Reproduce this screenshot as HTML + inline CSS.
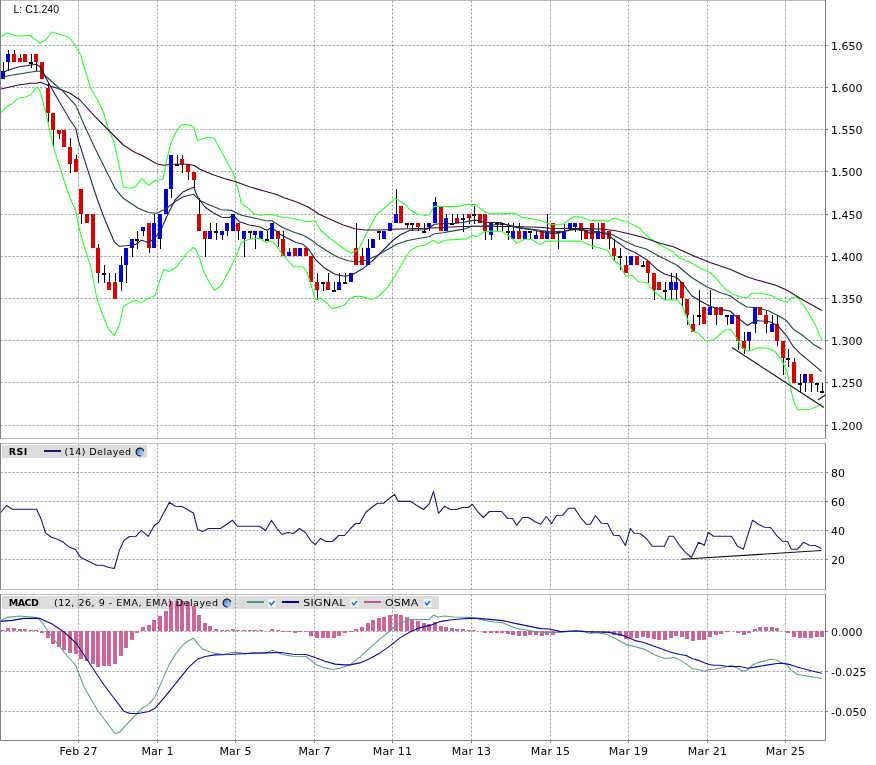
<!DOCTYPE html>
<html><head><meta charset="utf-8"><title>Chart</title>
<style>
html,body{margin:0;padding:0;background:#fff;}
body{width:876px;height:765px;overflow:hidden;}
svg{display:block;will-change:transform;}
.ax{font-family:"DejaVu Sans","Liberation Sans",sans-serif;font-size:11px;fill:#000;}
.lb{font-family:"DejaVu Sans","Liberation Sans",sans-serif;font-size:9.5px;fill:#000;}
.lbb{font-family:"DejaVu Sans","Liberation Sans",sans-serif;font-size:9.5px;font-weight:bold;fill:#000;}
.top{font-family:"Liberation Sans",sans-serif;font-size:10.5px;fill:#000;}
.g{stroke:#989898;stroke-width:1;stroke-dasharray:2 2;}
.b{stroke:#808080;stroke-width:1;shape-rendering:crispEdges;fill:none;}
.ln{fill:none;stroke-width:1.1;stroke-linejoin:round;}
</style></head><body>
<svg width="876" height="765" viewBox="0 0 876 765">
<rect width="876" height="765" fill="#fff"/>
<defs><linearGradient id="gb" x1="0" y1="0" x2="1" y2="1"><stop offset="0" stop-color="#2f5f96"/><stop offset="0.45" stop-color="#7fb2e6"/><stop offset="1" stop-color="#b4dcff"/></linearGradient></defs>
<rect x="2" y="445" width="145" height="13" fill="#dcdcdc"/>
<rect x="2" y="596" width="437" height="13" fill="#dcdcdc"/>
<g class="g">
<line x1="78.5" y1="0.5" x2="78.5" y2="438"/><line x1="157.5" y1="0.5" x2="157.5" y2="438"/><line x1="235.5" y1="0.5" x2="235.5" y2="438"/><line x1="314.5" y1="0.5" x2="314.5" y2="438"/><line x1="392.5" y1="0.5" x2="392.5" y2="438"/><line x1="471.5" y1="0.5" x2="471.5" y2="438"/><line x1="550.5" y1="0.5" x2="550.5" y2="438"/><line x1="628.5" y1="0.5" x2="628.5" y2="438"/><line x1="707.5" y1="0.5" x2="707.5" y2="438"/><line x1="785.5" y1="0.5" x2="785.5" y2="438"/><line x1="78.5" y1="443.5" x2="78.5" y2="589"/><line x1="157.5" y1="443.5" x2="157.5" y2="589"/><line x1="235.5" y1="443.5" x2="235.5" y2="589"/><line x1="314.5" y1="443.5" x2="314.5" y2="589"/><line x1="392.5" y1="443.5" x2="392.5" y2="589"/><line x1="471.5" y1="443.5" x2="471.5" y2="589"/><line x1="550.5" y1="443.5" x2="550.5" y2="589"/><line x1="628.5" y1="443.5" x2="628.5" y2="589"/><line x1="707.5" y1="443.5" x2="707.5" y2="589"/><line x1="785.5" y1="443.5" x2="785.5" y2="589"/><line x1="78.5" y1="594.5" x2="78.5" y2="740"/><line x1="157.5" y1="594.5" x2="157.5" y2="740"/><line x1="235.5" y1="594.5" x2="235.5" y2="740"/><line x1="314.5" y1="594.5" x2="314.5" y2="740"/><line x1="392.5" y1="594.5" x2="392.5" y2="740"/><line x1="471.5" y1="594.5" x2="471.5" y2="740"/><line x1="550.5" y1="594.5" x2="550.5" y2="740"/><line x1="628.5" y1="594.5" x2="628.5" y2="740"/><line x1="707.5" y1="594.5" x2="707.5" y2="740"/><line x1="785.5" y1="594.5" x2="785.5" y2="740"/><line x1="0.5" y1="45.5" x2="825" y2="45.5"/><line x1="0.5" y1="87.5" x2="825" y2="87.5"/><line x1="0.5" y1="129.5" x2="825" y2="129.5"/><line x1="0.5" y1="171.5" x2="825" y2="171.5"/><line x1="0.5" y1="214.5" x2="825" y2="214.5"/><line x1="0.5" y1="256.5" x2="825" y2="256.5"/><line x1="0.5" y1="298.5" x2="825" y2="298.5"/><line x1="0.5" y1="340.5" x2="825" y2="340.5"/><line x1="0.5" y1="382.5" x2="825" y2="382.5"/><line x1="0.5" y1="425.5" x2="825" y2="425.5"/><line x1="0.5" y1="472.5" x2="825" y2="472.5"/><line x1="0.5" y1="501.5" x2="825" y2="501.5"/><line x1="0.5" y1="530.5" x2="825" y2="530.5"/><line x1="0.5" y1="559.5" x2="825" y2="559.5"/><line x1="0.5" y1="631.5" x2="825" y2="631.5"/><line x1="0.5" y1="671.5" x2="825" y2="671.5"/><line x1="0.5" y1="711.5" x2="825" y2="711.5"/>
</g>
<g shape-rendering="crispEdges">
<rect x="3" y="62" width="1" height="17" fill="#000"/><rect x="1" y="71" width="4" height="8" fill="#0000d0"/><rect x="8" y="50" width="1" height="21" fill="#000"/><rect x="6" y="54" width="4" height="8" fill="#0000d0"/><rect x="14" y="50" width="1" height="12" fill="#000"/><rect x="12" y="54" width="4" height="8" fill="#d40000"/><rect x="20" y="54" width="1" height="8" fill="#000"/><rect x="18" y="58" width="4" height="4" fill="#d40000"/><rect x="25" y="54" width="1" height="8" fill="#000"/><rect x="23" y="54" width="4" height="8" fill="#d40000"/><rect x="31" y="54" width="1" height="14" fill="#000"/><rect x="29" y="62" width="4" height="2" fill="#000"/><rect x="36" y="54" width="1" height="17" fill="#000"/><rect x="34" y="54" width="4" height="8" fill="#d40000"/><rect x="42" y="62" width="1" height="17" fill="#000"/><rect x="40" y="62" width="4" height="17" fill="#d40000"/><rect x="48" y="83" width="1" height="39" fill="#000"/><rect x="46" y="88" width="4" height="25" fill="#d40000"/><rect x="53" y="113" width="1" height="34" fill="#000"/><rect x="51" y="113" width="4" height="17" fill="#d40000"/><rect x="59" y="130" width="1" height="9" fill="#000"/><rect x="57" y="130" width="4" height="4" fill="#d40000"/><rect x="64" y="130" width="1" height="17" fill="#000"/><rect x="62" y="130" width="4" height="17" fill="#d40000"/><rect x="70" y="138" width="1" height="35" fill="#000"/><rect x="68" y="147" width="4" height="17" fill="#d40000"/><rect x="76" y="155" width="1" height="17" fill="#000"/><rect x="74" y="159" width="4" height="13" fill="#d40000"/><rect x="81" y="189" width="1" height="35" fill="#000"/><rect x="79" y="189" width="4" height="25" fill="#d40000"/><rect x="87" y="214" width="1" height="9" fill="#000"/><rect x="85" y="214" width="4" height="9" fill="#d40000"/><rect x="93" y="214" width="1" height="34" fill="#000"/><rect x="91" y="214" width="4" height="34" fill="#d40000"/><rect x="98" y="244" width="1" height="39" fill="#000"/><rect x="96" y="248" width="4" height="25" fill="#d40000"/><rect x="104" y="265" width="1" height="18" fill="#000"/><rect x="102" y="273" width="4" height="2" fill="#000"/><rect x="109" y="273" width="1" height="17" fill="#000"/><rect x="107" y="282" width="4" height="8" fill="#d40000"/><rect x="115" y="273" width="1" height="26" fill="#000"/><rect x="113" y="282" width="4" height="17" fill="#d40000"/><rect x="121" y="256" width="1" height="35" fill="#000"/><rect x="119" y="265" width="4" height="17" fill="#0000d0"/><rect x="126" y="248" width="1" height="35" fill="#000"/><rect x="124" y="248" width="4" height="17" fill="#0000d0"/><rect x="132" y="239" width="1" height="18" fill="#000"/><rect x="130" y="239" width="4" height="9" fill="#0000d0"/><rect x="137" y="231" width="1" height="18" fill="#000"/><rect x="135" y="239" width="4" height="2" fill="#000"/><rect x="143" y="227" width="1" height="9" fill="#000"/><rect x="141" y="227" width="4" height="4" fill="#0000d0"/><rect x="149" y="223" width="1" height="30" fill="#000"/><rect x="147" y="223" width="4" height="25" fill="#d40000"/><rect x="154" y="214" width="1" height="34" fill="#000"/><rect x="152" y="223" width="4" height="25" fill="#0000d0"/><rect x="160" y="214" width="1" height="35" fill="#000"/><rect x="158" y="214" width="4" height="25" fill="#0000d0"/><rect x="166" y="189" width="1" height="25" fill="#000"/><rect x="164" y="189" width="4" height="25" fill="#0000d0"/><rect x="171" y="155" width="1" height="43" fill="#000"/><rect x="169" y="155" width="4" height="34" fill="#0000d0"/><rect x="177" y="155" width="1" height="10" fill="#000"/><rect x="175" y="164" width="4" height="2" fill="#000"/><rect x="182" y="155" width="1" height="18" fill="#000"/><rect x="180" y="159" width="4" height="5" fill="#d40000"/><rect x="188" y="165" width="1" height="15" fill="#000"/><rect x="186" y="165" width="4" height="7" fill="#d40000"/><rect x="194" y="172" width="1" height="16" fill="#000"/><rect x="192" y="172" width="4" height="8" fill="#d40000"/><rect x="199" y="198" width="1" height="33" fill="#000"/><rect x="197" y="214" width="4" height="17" fill="#d40000"/><rect x="205" y="231" width="1" height="26" fill="#000"/><rect x="203" y="231" width="4" height="8" fill="#d40000"/><rect x="210" y="223" width="1" height="16" fill="#000"/><rect x="208" y="231" width="4" height="8" fill="#0000d0"/><rect x="216" y="223" width="1" height="17" fill="#000"/><rect x="214" y="231" width="4" height="2" fill="#000"/><rect x="222" y="231" width="1" height="9" fill="#000"/><rect x="220" y="231" width="4" height="4" fill="#0000d0"/><rect x="227" y="223" width="1" height="13" fill="#000"/><rect x="225" y="223" width="4" height="8" fill="#0000d0"/><rect x="233" y="214" width="1" height="17" fill="#000"/><rect x="231" y="214" width="4" height="17" fill="#0000d0"/><rect x="238" y="223" width="1" height="17" fill="#000"/><rect x="236" y="223" width="4" height="8" fill="#d40000"/><rect x="244" y="231" width="1" height="26" fill="#000"/><rect x="242" y="231" width="4" height="8" fill="#0000d0"/><rect x="250" y="232" width="1" height="7" fill="#000"/><rect x="248" y="231" width="4" height="2" fill="#000"/><rect x="255" y="231" width="1" height="18" fill="#000"/><rect x="253" y="231" width="4" height="4" fill="#0000d0"/><rect x="261" y="231" width="1" height="8" fill="#000"/><rect x="259" y="231" width="4" height="8" fill="#0000d0"/><rect x="267" y="231" width="1" height="9" fill="#000"/><rect x="265" y="239" width="4" height="2" fill="#000"/><rect x="272" y="223" width="1" height="16" fill="#000"/><rect x="270" y="223" width="4" height="16" fill="#0000d0"/><rect x="278" y="231" width="1" height="16" fill="#000"/><rect x="276" y="231" width="4" height="8" fill="#d40000"/><rect x="283" y="231" width="1" height="25" fill="#000"/><rect x="281" y="239" width="4" height="17" fill="#d40000"/><rect x="289" y="248" width="1" height="8" fill="#000"/><rect x="287" y="252" width="4" height="4" fill="#0000d0"/><rect x="295" y="248" width="1" height="8" fill="#000"/><rect x="293" y="248" width="4" height="8" fill="#d40000"/><rect x="300" y="248" width="1" height="8" fill="#000"/><rect x="298" y="248" width="4" height="8" fill="#0000d0"/><rect x="306" y="248" width="1" height="8" fill="#000"/><rect x="304" y="248" width="4" height="8" fill="#d40000"/><rect x="311" y="256" width="1" height="26" fill="#000"/><rect x="309" y="256" width="4" height="26" fill="#d40000"/><rect x="317" y="273" width="1" height="27" fill="#000"/><rect x="315" y="282" width="4" height="8" fill="#d40000"/><rect x="323" y="283" width="1" height="8" fill="#000"/><rect x="321" y="282" width="4" height="2" fill="#000"/><rect x="328" y="273" width="1" height="17" fill="#000"/><rect x="326" y="282" width="4" height="8" fill="#d40000"/><rect x="334" y="282" width="1" height="9" fill="#000"/><rect x="332" y="290" width="4" height="2" fill="#000"/><rect x="339" y="273" width="1" height="17" fill="#000"/><rect x="337" y="282" width="4" height="8" fill="#0000d0"/><rect x="345" y="273" width="1" height="10" fill="#000"/><rect x="343" y="282" width="4" height="2" fill="#000"/><rect x="351" y="273" width="1" height="9" fill="#000"/><rect x="349" y="273" width="4" height="9" fill="#0000d0"/><rect x="356" y="223" width="1" height="42" fill="#000"/><rect x="354" y="248" width="4" height="17" fill="#d40000"/><rect x="362" y="248" width="1" height="17" fill="#000"/><rect x="360" y="256" width="4" height="9" fill="#d40000"/><rect x="368" y="239" width="1" height="26" fill="#000"/><rect x="366" y="248" width="4" height="17" fill="#0000d0"/><rect x="373" y="239" width="1" height="9" fill="#000"/><rect x="371" y="239" width="4" height="9" fill="#0000d0"/><rect x="379" y="232" width="1" height="8" fill="#000"/><rect x="377" y="231" width="4" height="2" fill="#000"/><rect x="384" y="231" width="1" height="8" fill="#000"/><rect x="382" y="231" width="4" height="8" fill="#0000d0"/><rect x="390" y="223" width="1" height="8" fill="#000"/><rect x="388" y="223" width="4" height="8" fill="#0000d0"/><rect x="396" y="189" width="1" height="34" fill="#000"/><rect x="394" y="214" width="4" height="9" fill="#0000d0"/><rect x="401" y="206" width="1" height="17" fill="#000"/><rect x="399" y="206" width="4" height="17" fill="#d40000"/><rect x="407" y="224" width="1" height="4" fill="#000"/><rect x="405" y="223" width="4" height="2" fill="#000"/><rect x="412" y="224" width="1" height="7" fill="#000"/><rect x="410" y="223" width="4" height="2" fill="#000"/><rect x="418" y="223" width="1" height="8" fill="#000"/><rect x="416" y="223" width="4" height="4" fill="#d40000"/><rect x="424" y="223" width="1" height="9" fill="#000"/><rect x="422" y="231" width="4" height="2" fill="#000"/><rect x="429" y="223" width="1" height="8" fill="#000"/><rect x="427" y="223" width="4" height="4" fill="#0000d0"/><rect x="435" y="197" width="1" height="26" fill="#000"/><rect x="433" y="202" width="4" height="21" fill="#0000d0"/><rect x="441" y="207" width="1" height="24" fill="#000"/><rect x="439" y="207" width="4" height="24" fill="#d40000"/><rect x="446" y="214" width="1" height="17" fill="#000"/><rect x="444" y="218" width="4" height="13" fill="#0000d0"/><rect x="452" y="214" width="1" height="10" fill="#000"/><rect x="450" y="223" width="4" height="2" fill="#000"/><rect x="457" y="214" width="1" height="9" fill="#000"/><rect x="455" y="218" width="4" height="5" fill="#d40000"/><rect x="463" y="214" width="1" height="18" fill="#000"/><rect x="461" y="218" width="4" height="2" fill="#000"/><rect x="469" y="214" width="1" height="10" fill="#000"/><rect x="467" y="214" width="4" height="4" fill="#d40000"/><rect x="474" y="206" width="1" height="18" fill="#000"/><rect x="472" y="214" width="4" height="2" fill="#000"/><rect x="480" y="214" width="1" height="9" fill="#000"/><rect x="478" y="214" width="4" height="9" fill="#d40000"/><rect x="485" y="214" width="1" height="26" fill="#000"/><rect x="483" y="214" width="4" height="17" fill="#d40000"/><rect x="491" y="223" width="1" height="17" fill="#000"/><rect x="489" y="223" width="4" height="12" fill="#0000d0"/><rect x="497" y="224" width="1" height="7" fill="#000"/><rect x="495" y="223" width="4" height="2" fill="#000"/><rect x="502" y="224" width="1" height="8" fill="#000"/><rect x="500" y="223" width="4" height="2" fill="#000"/><rect x="508" y="223" width="1" height="17" fill="#000"/><rect x="506" y="231" width="4" height="2" fill="#000"/><rect x="513" y="223" width="1" height="16" fill="#000"/><rect x="511" y="231" width="4" height="8" fill="#0000d0"/><rect x="519" y="223" width="1" height="16" fill="#000"/><rect x="517" y="231" width="4" height="8" fill="#d40000"/><rect x="525" y="231" width="1" height="8" fill="#000"/><rect x="523" y="231" width="4" height="8" fill="#0000d0"/><rect x="530" y="232" width="1" height="7" fill="#000"/><rect x="528" y="231" width="4" height="2" fill="#000"/><rect x="536" y="231" width="1" height="8" fill="#000"/><rect x="534" y="235" width="4" height="4" fill="#0000d0"/><rect x="542" y="231" width="1" height="8" fill="#000"/><rect x="540" y="231" width="4" height="8" fill="#d40000"/><rect x="547" y="214" width="1" height="25" fill="#000"/><rect x="545" y="231" width="4" height="8" fill="#0000d0"/><rect x="553" y="223" width="1" height="16" fill="#000"/><rect x="551" y="223" width="4" height="16" fill="#d40000"/><rect x="558" y="232" width="1" height="17" fill="#000"/><rect x="556" y="231" width="4" height="2" fill="#000"/><rect x="564" y="224" width="1" height="15" fill="#000"/><rect x="562" y="232" width="4" height="7" fill="#0000d0"/><rect x="570" y="223" width="1" height="6" fill="#000"/><rect x="568" y="223" width="4" height="6" fill="#0000d0"/><rect x="575" y="223" width="1" height="9" fill="#000"/><rect x="573" y="223" width="4" height="4" fill="#0000d0"/><rect x="581" y="223" width="1" height="17" fill="#000"/><rect x="579" y="223" width="4" height="8" fill="#d40000"/><rect x="586" y="231" width="1" height="8" fill="#000"/><rect x="584" y="231" width="4" height="8" fill="#d40000"/><rect x="592" y="223" width="1" height="26" fill="#000"/><rect x="590" y="223" width="4" height="16" fill="#d40000"/><rect x="598" y="223" width="1" height="16" fill="#000"/><rect x="596" y="231" width="4" height="8" fill="#0000d0"/><rect x="603" y="223" width="1" height="16" fill="#000"/><rect x="601" y="223" width="4" height="16" fill="#d40000"/><rect x="609" y="231" width="1" height="18" fill="#000"/><rect x="607" y="231" width="4" height="8" fill="#d40000"/><rect x="614" y="239" width="1" height="22" fill="#000"/><rect x="612" y="248" width="4" height="8" fill="#d40000"/><rect x="620" y="248" width="1" height="22" fill="#000"/><rect x="618" y="256" width="4" height="2" fill="#000"/><rect x="626" y="256" width="1" height="17" fill="#000"/><rect x="624" y="265" width="4" height="8" fill="#d40000"/><rect x="631" y="256" width="1" height="9" fill="#000"/><rect x="629" y="256" width="4" height="9" fill="#0000d0"/><rect x="637" y="256" width="1" height="9" fill="#000"/><rect x="635" y="256" width="4" height="9" fill="#d40000"/><rect x="643" y="261" width="1" height="5" fill="#000"/><rect x="641" y="265" width="4" height="2" fill="#000"/><rect x="648" y="261" width="1" height="22" fill="#000"/><rect x="646" y="261" width="4" height="12" fill="#d40000"/><rect x="654" y="273" width="1" height="27" fill="#000"/><rect x="652" y="273" width="4" height="17" fill="#d40000"/><rect x="659" y="282" width="1" height="8" fill="#000"/><rect x="657" y="282" width="4" height="8" fill="#d40000"/><rect x="665" y="282" width="1" height="18" fill="#000"/><rect x="663" y="290" width="4" height="2" fill="#000"/><rect x="671" y="273" width="1" height="27" fill="#000"/><rect x="669" y="282" width="4" height="8" fill="#0000d0"/><rect x="676" y="273" width="1" height="27" fill="#000"/><rect x="674" y="282" width="4" height="8" fill="#0000d0"/><rect x="682" y="282" width="1" height="26" fill="#000"/><rect x="680" y="282" width="4" height="16" fill="#d40000"/><rect x="687" y="299" width="1" height="26" fill="#000"/><rect x="685" y="299" width="4" height="16" fill="#d40000"/><rect x="693" y="315" width="1" height="17" fill="#000"/><rect x="691" y="324" width="4" height="8" fill="#d40000"/><rect x="699" y="290" width="1" height="35" fill="#000"/><rect x="697" y="315" width="4" height="2" fill="#000"/><rect x="704" y="307" width="1" height="17" fill="#000"/><rect x="702" y="307" width="4" height="17" fill="#d40000"/><rect x="710" y="290" width="1" height="25" fill="#000"/><rect x="708" y="307" width="4" height="8" fill="#0000d0"/><rect x="716" y="307" width="1" height="18" fill="#000"/><rect x="714" y="307" width="4" height="8" fill="#d40000"/><rect x="721" y="307" width="1" height="8" fill="#000"/><rect x="719" y="307" width="4" height="8" fill="#d40000"/><rect x="727" y="316" width="1" height="9" fill="#000"/><rect x="725" y="315" width="4" height="2" fill="#000"/><rect x="732" y="315" width="1" height="9" fill="#000"/><rect x="730" y="315" width="4" height="9" fill="#0000d0"/><rect x="738" y="315" width="1" height="35" fill="#000"/><rect x="736" y="315" width="4" height="26" fill="#d40000"/><rect x="744" y="332" width="1" height="22" fill="#000"/><rect x="742" y="341" width="4" height="8" fill="#d40000"/><rect x="749" y="332" width="1" height="18" fill="#000"/><rect x="747" y="332" width="4" height="9" fill="#0000d0"/><rect x="755" y="307" width="1" height="26" fill="#000"/><rect x="753" y="307" width="4" height="17" fill="#0000d0"/><rect x="760" y="307" width="1" height="8" fill="#000"/><rect x="758" y="307" width="4" height="8" fill="#d40000"/><rect x="766" y="311" width="1" height="22" fill="#000"/><rect x="764" y="315" width="4" height="9" fill="#d40000"/><rect x="772" y="315" width="1" height="17" fill="#000"/><rect x="770" y="324" width="4" height="8" fill="#0000d0"/><rect x="777" y="315" width="1" height="31" fill="#000"/><rect x="775" y="324" width="4" height="17" fill="#d40000"/><rect x="783" y="341" width="1" height="34" fill="#000"/><rect x="781" y="341" width="4" height="17" fill="#d40000"/><rect x="788" y="349" width="1" height="18" fill="#000"/><rect x="786" y="358" width="4" height="2" fill="#000"/><rect x="794" y="358" width="1" height="25" fill="#000"/><rect x="792" y="362" width="4" height="21" fill="#d40000"/><rect x="800" y="374" width="1" height="18" fill="#000"/><rect x="798" y="383" width="4" height="2" fill="#000"/><rect x="805" y="374" width="1" height="18" fill="#000"/><rect x="803" y="374" width="4" height="9" fill="#0000d0"/><rect x="811" y="374" width="1" height="18" fill="#000"/><rect x="809" y="374" width="4" height="9" fill="#d40000"/><rect x="817" y="384" width="1" height="8" fill="#000"/><rect x="815" y="383" width="4" height="2" fill="#000"/><rect x="822" y="383" width="1" height="9" fill="#000"/><rect x="820" y="391" width="4" height="2" fill="#000"/>
</g>
<polyline class="ln" points="0,37.2 6.7,33 18.3,36.3 25,35.5 30.5,35.5 40,43.3 45.8,40 51.7,32 61.7,34.7 69.2,37.5 73.3,42.5 80.8,55 82.8,62.5 90.8,88.3 97.5,100 103.3,111.7 108.3,129.2 113.3,140 118.3,161.7 123.3,187 130,188.3 135.3,187 141.7,178.3 148.7,185.3 155,180.5 163,179.2 166.7,160 170.8,143.3 176.7,130.8 181.7,124.7 187.5,124.5 193.7,127 197.5,140.5 207.5,137.2 214.2,138.3 223.3,155 233.3,173.3 238.3,190 241.3,203.3 248.3,208.3 253.3,213.5 260,215.3 271.5,214.5 282,217.3 292.7,218.3 306,221.7 315.2,220.8 320.2,230 331,239 343.3,248.3 350.8,253.3 358.3,250 366.7,233.3 376.7,214.2 385,207.5 395,198.3 405,204.2 410,210 416.7,213.8 425,215.5 429.2,215 434.2,206.3 443.3,206.5 457.1,206.6 468.5,204.3 475.4,204.6 480,208.3 485.7,212.3 490.2,213.7 515.3,213.4 522.2,217.4 531.3,218.6 541.4,220.8 550.5,224.2 556.3,224.8 563.1,224 574.5,216.3 581.4,217.4 590.5,220.6 601.9,220.3 607.6,221.4 613.9,218 621.3,220.3 627,222 640,228.3 646.7,235.8 660,245 673.3,251.7 680,258.3 690,262 700,268.3 710,272.5 716.7,279.2 725,289 733.3,294.2 741.7,297.2 747.5,297.8 751.7,293.3 761.7,293.3 771.7,295.8 781.7,300.8 787.5,302.2 791.7,297.5 797.5,297 806.7,310 815,324.2 821.7,340" stroke="#33ff33" stroke-width="1.25"/>
<polyline class="ln" points="0,113.3 6.7,106.7 12.5,103.3 18.3,98.3 25,97 30.5,95 36.7,87.2 40,90.8 45.8,112.5 53.3,146.7 65,183.3 70.8,200 75.8,210.5 78.3,225 83.3,243.3 90.8,266.7 96.7,297.5 101.9,313 108.3,328.8 114.6,335.5 119.5,324.5 121.6,314.4 123.4,306.5 129.5,302.6 135.5,300.4 141.4,302.6 148.3,298.3 155,295.8 160,280 163.8,269.2 169.2,271.7 176.7,266.7 186.7,253.3 193.3,247.5 196,249.7 198.5,255 204.3,273.3 214.3,290.5 221,285.8 229.3,270 236,256.7 241.3,242.5 249.3,239.2 259.3,238.3 266,242.5 271,240.8 276,245 282.7,255 293.5,266.7 302.7,266.7 306.8,271.7 309.7,280 315.2,299.4 320.2,298.3 326.1,302.4 332.5,308.6 338.9,306.9 344.4,305.1 349.9,298.7 354.4,296.4 360.8,296.4 366.3,297.8 371.3,299.5 376,297.8 380,295 388.3,286.7 396.7,273.3 405,258.3 410,250.8 416.7,246.7 425,245 433.3,240.3 438.3,243.3 444.6,240.2 457.1,239.4 466.3,238.9 472.5,235.3 477.1,236.6 484.5,231.7 491.4,231.1 501.6,231.1 508.5,235.7 513.1,239.1 516.5,243.4 524.5,239.3 531.3,239.3 540.3,244.6 546,241.4 552.8,241.1 580.2,241.1 592.2,245.9 600.8,248.2 607.6,250.5 613.9,260.5 620.2,265.3 625.8,276.3 631.7,275 638.3,281.7 646.7,282.5 653.3,290.8 665,300 676.7,299.7 681.7,305 687,318.3 691.7,330.8 698.3,333.3 705.8,340.8 713.3,340 720,334.5 725,330.3 730.8,329.5 736.7,338.3 741.7,347.5 748.3,351.3 758.3,347.8 768.3,348.3 775,351.7 781.7,360 786.7,370.8 790,385 793.3,400 797.5,410 810,409.2 816.7,406.7 821.7,403.3" stroke="#33ff33" stroke-width="1.25"/>
<polyline class="ln" points="0,89.2 18.3,85 30.5,83.3 36.2,83.2 40.5,82.2 48.3,85.5 57.5,88.3 70,93.3 80,100 95,116.7 108.3,130 123.3,145 135,152.5 141.7,155.3 150,160 156.7,163.7 163.3,165.3 173.3,164.2 188.3,164.2 194.2,165.5 200,169.2 211.7,174.2 225,178.7 235.8,181.7 250,187 266.7,191.7 276.7,194.5 283.3,197.5 296,201.8 307.7,206.7 319.3,214.2 331.7,220 343.3,225 355,228.8 365,230 380,230 393.3,229.2 410,228.7 426.7,228.3 443.3,227.5 457.1,226.8 472,226.3 485.7,226.3 510,226.5 540,227.2 550.5,228.2 564.2,228.5 587.1,228.6 604.2,229.2 615.6,230.8 626.7,233.3 643.3,237.5 660,243.3 673.3,246.7 693.3,255.8 710,262.5 730,269.2 746.7,276.7 756,279.7 775,285 786.7,290 800,298.3 813.3,305.8 821.7,310.5" stroke="#380838" stroke-width="1.25"/>
<polyline class="ln" points="0,78.3 8.3,75.8 36.2,71.3 40.5,71.3 50,80 63.3,91.7 75.8,105.4 84.2,125 95,148.3 106.7,171.7 115,188.3 123.3,198.3 138.3,208.3 148.3,212.5 156.7,213.2 166,208.8 175,201.7 183.3,196.7 193.3,194.2 200,200.5 210,205.3 221.5,209.8 231.8,210.4 241.5,215.2 254,218 266,220.8 271.8,220.8 282.7,227.5 292.7,231.7 304.3,235.8 312,240.5 316.7,244.2 326.7,250.8 338.3,257.5 348.3,260.8 358.3,262 366.7,260 376.7,255.8 386.7,250 396.7,244.2 406.7,240.8 416.7,238.8 429.2,236.7 434.2,233.7 443.3,232.7 451.4,231.1 462.8,229.4 472,226.3 485.7,226.3 497,224.2 502.8,223.7 514.2,226.5 525.6,228.2 541.4,230.5 552.8,231.7 564.2,231.1 575.7,229.4 587.1,230.5 598.5,232 609.9,233.5 616.8,237 623.3,240.5 635,245.8 646.7,249.2 660,256.7 676.7,265 691.7,277.5 706.7,286.7 720,292.5 730,295.8 738.3,301.7 746.7,307 758.3,308 768.3,310.8 778.3,315.8 786.7,320.8 793.3,329.2 803.3,335.8 813.3,344.2 821.7,349.2" stroke="#1e4646" stroke-width="1.2"/>
<polyline class="ln" points="0,73.8 8.3,70 18.3,67 36.2,64.2 40,66.7 48.3,82.5 58.3,100 70,120 75.8,128.3 78.7,141.7 88.3,171.7 97.5,200 105,220 114.2,241.7 119.2,246.3 126.7,245.8 135.8,244.2 141.3,240.3 148.3,242.5 155,238.3 161.7,228.3 166.7,216.7 175,200 183.3,191.7 193.7,187.2 197.5,196.7 204.5,206.5 212.7,212.5 221.8,217.2 229.3,217.5 233,215 239.3,221.7 249.3,225 259.3,226.7 266.8,230.3 271.8,227.5 279.3,233.7 286,237.5 296,242.5 302.7,244.2 309.3,250 315.8,260 325,268.3 335,274.2 345,276.3 353.3,274.2 363.3,268.3 373.3,260 383.3,250 393.3,240 400,235 410,230.3 425,229.7 430,227.5 434.2,224.2 443.3,223.5 451.4,223.7 462.8,222.5 473.1,220.3 477.7,220.6 485.7,222.5 500.5,222.5 508.5,225.4 519.9,228.2 531.3,229.8 541.4,231.7 552.8,233.4 558.5,233.2 570,229.4 581.4,228.8 590.5,233.4 598.5,232.2 607.6,234.5 614.5,240.2 621.3,244.8 625.9,248.6 635,252.5 646.7,259.7 656.7,269.2 665,274.2 676.7,277.5 683.3,284.2 691.7,295.8 700,300.8 710,306.3 720,309.4 730,311 738.3,318.3 747.5,325.5 755.8,320.5 770,321.7 778.3,326.3 786.7,335.8 793.3,346.7 800,353.3 810,361.7 821.7,371.7" stroke="#1e1e50" stroke-width="1.2"/>
<line x1="732" y1="347.5" x2="824" y2="407.5" stroke="#111" stroke-width="1.1"/>
<line x1="818" y1="399.7" x2="825.5" y2="395" stroke="#111" stroke-width="1.1"/>
<polyline class="ln" points="0,513.5 6.4,505.5 12.4,509.3 36.6,509.3 41,518.9 45.5,532.9 51.5,537.3 57.9,539.5 63.5,542.3 69.5,547.3 75.5,549.5 80.5,557.3 87.9,560.9 96.5,565.3 102.5,565.3 108.9,567.5 114.3,568.5 119.5,549.9 123.9,540.5 129.4,536.5 135.8,536.3 141.4,530.3 148.4,536.3 154.2,525.5 158.8,522.3 169.4,502.3 175.4,506.3 182,506.5 187.6,509.5 193.6,513.3 197.6,529.5 202.6,531.5 208.5,528.5 220.5,528.5 232.5,520.3 237.5,526.3 259.5,526.3 265.5,530.5 271.5,520.3 276.9,528.5 281.9,534.5 287.9,532.5 293.4,533.5 299.4,528.5 305.4,532.5 311.4,541.5 315.4,544.5 320.4,538.5 326.4,541.5 332.6,541.5 338.6,535.5 344.6,535.5 350.6,528.5 355.6,523.5 359.6,523.5 365.6,512.5 371.6,507.5 377.5,503.3 383.5,503.3 394.5,494.4 398.5,501.4 410.5,501.4 416.5,505.3 423.5,509.5 429.5,503.3 433.5,491.4 438.5,513.3 444.5,506.3 450.5,509.5 456.4,509.5 462.4,507.5 468.4,507.5 472.4,504.3 477.4,511.3 483.4,517.5 489.4,511.5 501.6,511.5 507.6,518.3 512.6,518.5 516.6,525.3 522.6,517.5 528.6,517.5 534.6,521.5 540.5,524.3 546.5,516.5 551.5,523.5 556.5,515.5 562.5,515.3 568.5,508.3 574.5,508.3 580.5,517.3 586.5,524.3 590.5,524.3 595.5,515.5 601.5,523.3 607.5,523.5 613.5,535.3 619.4,535.5 625.4,545.5 630.4,528.5 634.4,533.5 640.4,533.7 646.4,538.5 652.4,546.3 664.4,546.3 669,536.3 673.4,536.3 679.4,545.3 685.4,552.3 691.4,557.5 698.6,542.3 704.3,545.3 708.3,532.5 713.5,536.3 731.5,536.3 737.5,546.3 743.3,549.3 752.5,520.3 758.5,524.3 764.5,527.3 770.5,527.5 776.5,535.3 782.5,541.3 787.5,541.5 791.4,549.3 797.4,549.3 803.4,542.3 809.4,545.3 815.4,545.5 821.4,548.5" stroke="#191970" stroke-width="1.3"/>
<line x1="681.6" y1="559.3" x2="821.4" y2="550.5" stroke="#111" stroke-width="1.1"/>
<g shape-rendering="crispEdges" fill="#cc6699">
<rect x="1" y="630" width="4" height="1"/><rect x="6" y="628" width="4" height="3"/><rect x="12" y="628" width="4" height="3"/><rect x="18" y="629" width="4" height="2"/><rect x="23" y="629" width="4" height="2"/><rect x="29" y="630" width="4" height="1"/><rect x="34" y="630" width="4" height="1"/><rect x="40" y="631" width="4" height="2"/><rect x="46" y="631" width="4" height="7"/><rect x="51" y="631" width="4" height="13"/><rect x="57" y="631" width="4" height="16"/><rect x="62" y="631" width="4" height="19"/><rect x="68" y="631" width="4" height="22"/><rect x="74" y="631" width="4" height="23"/><rect x="79" y="631" width="4" height="28"/><rect x="85" y="631" width="4" height="30"/><rect x="91" y="631" width="4" height="33"/><rect x="96" y="631" width="4" height="36"/><rect x="102" y="631" width="4" height="35"/><rect x="107" y="631" width="4" height="35"/><rect x="113" y="631" width="4" height="33"/><rect x="119" y="631" width="4" height="25"/><rect x="124" y="631" width="4" height="17"/><rect x="130" y="631" width="4" height="9"/><rect x="135" y="631" width="4" height="2"/><rect x="141" y="627" width="4" height="4"/><rect x="147" y="625" width="4" height="6"/><rect x="152" y="620" width="4" height="11"/><rect x="158" y="616" width="4" height="15"/><rect x="164" y="611" width="4" height="20"/><rect x="169" y="601" width="4" height="30"/><rect x="175" y="601" width="4" height="30"/><rect x="180" y="601" width="4" height="30"/><rect x="186" y="602" width="4" height="29"/><rect x="192" y="606" width="4" height="25"/><rect x="197" y="615" width="4" height="16"/><rect x="203" y="623" width="4" height="8"/><rect x="208" y="626" width="4" height="5"/><rect x="214" y="629" width="4" height="2"/><rect x="220" y="630" width="4" height="1"/><rect x="225" y="630" width="4" height="1"/><rect x="231" y="629" width="4" height="2"/><rect x="236" y="630" width="4" height="1"/><rect x="242" y="630" width="4" height="1"/><rect x="248" y="630" width="4" height="1"/><rect x="253" y="630" width="4" height="1"/><rect x="259" y="630" width="4" height="1"/><rect x="270" y="629" width="4" height="2"/><rect x="276" y="630" width="4" height="1"/><rect x="281" y="631" width="4" height="1"/><rect x="287" y="631" width="4" height="1"/><rect x="293" y="631" width="4" height="2"/><rect x="298" y="631" width="4" height="1"/><rect x="304" y="631" width="4" height="1"/><rect x="309" y="631" width="4" height="5"/><rect x="315" y="631" width="4" height="7"/><rect x="321" y="631" width="4" height="7"/><rect x="326" y="631" width="4" height="7"/><rect x="332" y="631" width="4" height="7"/><rect x="337" y="631" width="4" height="5"/><rect x="343" y="631" width="4" height="2"/><rect x="349" y="631" width="4" height="1"/><rect x="354" y="629" width="4" height="2"/><rect x="360" y="627" width="4" height="4"/><rect x="366" y="623" width="4" height="8"/><rect x="371" y="620" width="4" height="11"/><rect x="377" y="618" width="4" height="13"/><rect x="382" y="617" width="4" height="14"/><rect x="388" y="615" width="4" height="16"/><rect x="394" y="614" width="4" height="17"/><rect x="399" y="615" width="4" height="16"/><rect x="405" y="617" width="4" height="14"/><rect x="410" y="619" width="4" height="12"/><rect x="416" y="621" width="4" height="10"/><rect x="422" y="623" width="4" height="8"/><rect x="427" y="624" width="4" height="7"/><rect x="433" y="622" width="4" height="9"/><rect x="439" y="626" width="4" height="5"/><rect x="444" y="627" width="4" height="4"/><rect x="450" y="628" width="4" height="3"/><rect x="455" y="629" width="4" height="2"/><rect x="461" y="629" width="4" height="2"/><rect x="467" y="630" width="4" height="1"/><rect x="472" y="630" width="4" height="1"/><rect x="483" y="631" width="4" height="2"/><rect x="489" y="631" width="4" height="2"/><rect x="495" y="631" width="4" height="2"/><rect x="500" y="631" width="4" height="2"/><rect x="506" y="631" width="4" height="3"/><rect x="511" y="631" width="4" height="4"/><rect x="517" y="631" width="4" height="5"/><rect x="523" y="631" width="4" height="5"/><rect x="528" y="631" width="4" height="4"/><rect x="534" y="631" width="4" height="4"/><rect x="540" y="631" width="4" height="5"/><rect x="545" y="631" width="4" height="4"/><rect x="551" y="631" width="4" height="4"/><rect x="556" y="631" width="4" height="2"/><rect x="562" y="631" width="4" height="1"/><rect x="573" y="630" width="4" height="1"/><rect x="584" y="631" width="4" height="1"/><rect x="590" y="631" width="4" height="2"/><rect x="596" y="631" width="4" height="1"/><rect x="601" y="631" width="4" height="2"/><rect x="607" y="631" width="4" height="2"/><rect x="612" y="631" width="4" height="4"/><rect x="618" y="631" width="4" height="5"/><rect x="624" y="631" width="4" height="8"/><rect x="629" y="631" width="4" height="7"/><rect x="635" y="631" width="4" height="7"/><rect x="641" y="631" width="4" height="6"/><rect x="646" y="631" width="4" height="7"/><rect x="652" y="631" width="4" height="8"/><rect x="657" y="631" width="4" height="9"/><rect x="663" y="631" width="4" height="9"/><rect x="669" y="631" width="4" height="7"/><rect x="674" y="631" width="4" height="5"/><rect x="680" y="631" width="4" height="6"/><rect x="685" y="631" width="4" height="8"/><rect x="691" y="631" width="4" height="10"/><rect x="697" y="631" width="4" height="9"/><rect x="702" y="631" width="4" height="9"/><rect x="708" y="631" width="4" height="6"/><rect x="714" y="631" width="4" height="4"/><rect x="719" y="631" width="4" height="3"/><rect x="725" y="631" width="4" height="1"/><rect x="736" y="631" width="4" height="2"/><rect x="742" y="631" width="4" height="4"/><rect x="747" y="631" width="4" height="2"/><rect x="753" y="629" width="4" height="2"/><rect x="758" y="627" width="4" height="4"/><rect x="764" y="627" width="4" height="4"/><rect x="770" y="627" width="4" height="4"/><rect x="775" y="628" width="4" height="3"/><rect x="786" y="631" width="4" height="2"/><rect x="792" y="631" width="4" height="6"/><rect x="798" y="631" width="4" height="7"/><rect x="803" y="631" width="4" height="7"/><rect x="809" y="631" width="4" height="7"/><rect x="815" y="631" width="4" height="6"/><rect x="820" y="631" width="4" height="6"/>
</g>
<polyline class="ln" points="0,621 7,617.4 20,616 37,617.6 41,621 52,637 64,652 76,666 84,687 98,711 115,733.5 119.5,732.3 128,722.9 142,708.3 149,703.9 155,696.9 162,680.9 169,664.9 175,654.9 182,645.9 188,640.9 193.6,638.3 198,643.9 202.4,648.9 213,652.9 223,654.5 233,652.3 239,652.5 245,653.9 255,652.5 266,653.3 272,650.3 277,651.5 282,654.5 293,656.3 306,656.5 316,664.5 325,667.9 333,669.5 340,668.1 350,664.9 360,656.9 370,647.9 380,638.9 390,631 398,624 410,619.6 429.5,619.4 433.5,615 438,617 444,616 454,617 470,617.4 478,618.6 486,620.6 494,622 502,622.6 509,625.4 517,628.6 527,630 535,631.6 547,632.6 559,632.4 567,631.6 575,630.6 583,631 590,633.4 597,632.6 607,634.4 617,639.4 626,644.6 635,646.6 645,649.4 655,654.9 664,658.3 670,658.3 673.6,657.3 680,659.9 686,663.9 692,668.5 698,669.5 704.3,671.3 709,669.5 714,669.3 724,667.5 731.5,665.3 737,667.9 743,671.3 747,670.5 752,665.3 758,662.5 765,660.9 771,659.3 777,660.3 782,662.9 787,665.3 791,669.9 797.4,674.5 810,676.5 821.8,678.5" stroke="#5f9e96" stroke-width="1.1"/>
<polyline class="ln" points="0,621.4 12,620.4 24,618.4 40,618.4 52,624 64,632 76,643 88,661 104,685 124,711.3 130,713.5 138,713.5 149,711.5 155,708.3 164,697.9 177,681.9 189,666.9 198,658.9 205,656.5 215,654.9 229,654.5 245,653.5 265,652.9 281,652.5 293,654.3 306,654.5 315,657.5 325,661.3 335,664.1 345,664.9 350,664.9 360,662.9 370,658.5 380,652.9 390,645.9 400,637.9 410,632 420,627.6 430,625.4 440,621.6 450,620 460,619 470,618.4 478,618.4 490,619.4 503,620.6 515,623.4 531,626.6 541,628.6 549,629 561,631.6 575,631 585,631.6 599,632 609,632.4 623,635.4 635,640.6 643,642.2 655,646.4 670,652 680,654.5 686,655.5 692,658.5 700,660.9 709,664.5 714,665.3 720,665.3 728,666.5 740,666.5 748,668.3 756,666.9 768,664.9 777,663.5 784,663.3 791,664.9 798,667.3 810,670.5 821.8,673.3" stroke="#0a0a9e" stroke-width="1.3"/>
<g shape-rendering="crispEdges"><rect x="0" y="0" width="826" height="1" fill="#bcbcbc"/><rect x="0" y="438" width="826" height="1" fill="#bcbcbc"/><rect x="0" y="0" width="1" height="439" fill="#808080"/><rect x="825" y="0" width="1" height="439" fill="#808080"/></g>
<g shape-rendering="crispEdges"><rect x="0" y="443" width="826" height="1" fill="#bcbcbc"/><rect x="0" y="589" width="826" height="1" fill="#bcbcbc"/><rect x="0" y="443" width="1" height="147" fill="#808080"/><rect x="825" y="443" width="1" height="147" fill="#808080"/></g>
<g shape-rendering="crispEdges"><rect x="0" y="594" width="826" height="1" fill="#bcbcbc"/><rect x="0" y="740" width="826" height="1" fill="#808080"/><rect x="0" y="594" width="1" height="147" fill="#808080"/><rect x="825" y="594" width="1" height="147" fill="#808080"/></g>
<g class="b"><line x1="826" y1="45.5" x2="828" y2="45.5"/><line x1="826" y1="87.5" x2="828" y2="87.5"/><line x1="826" y1="129.5" x2="828" y2="129.5"/><line x1="826" y1="171.5" x2="828" y2="171.5"/><line x1="826" y1="214.5" x2="828" y2="214.5"/><line x1="826" y1="256.5" x2="828" y2="256.5"/><line x1="826" y1="298.5" x2="828" y2="298.5"/><line x1="826" y1="340.5" x2="828" y2="340.5"/><line x1="826" y1="382.5" x2="828" y2="382.5"/><line x1="826" y1="425.5" x2="828" y2="425.5"/><line x1="826" y1="472.5" x2="828" y2="472.5"/><line x1="826" y1="501.5" x2="828" y2="501.5"/><line x1="826" y1="530.5" x2="828" y2="530.5"/><line x1="826" y1="559.5" x2="828" y2="559.5"/><line x1="826" y1="631.5" x2="828" y2="631.5"/><line x1="826" y1="671.5" x2="828" y2="671.5"/><line x1="826" y1="711.5" x2="828" y2="711.5"/><line x1="78.5" y1="740" x2="78.5" y2="743"/><line x1="157.5" y1="740" x2="157.5" y2="743"/><line x1="235.5" y1="740" x2="235.5" y2="743"/><line x1="314.5" y1="740" x2="314.5" y2="743"/><line x1="392.5" y1="740" x2="392.5" y2="743"/><line x1="471.5" y1="740" x2="471.5" y2="743"/><line x1="550.5" y1="740" x2="550.5" y2="743"/><line x1="628.5" y1="740" x2="628.5" y2="743"/><line x1="707.5" y1="740" x2="707.5" y2="743"/><line x1="785.5" y1="740" x2="785.5" y2="743"/></g>
<text class="ax" x="831" y="49.5">1.650</text><text class="ax" x="831" y="91.5">1.600</text><text class="ax" x="831" y="133.5">1.550</text><text class="ax" x="831" y="175.5">1.500</text><text class="ax" x="831" y="218.5">1.450</text><text class="ax" x="831" y="260.5">1.400</text><text class="ax" x="831" y="302.5">1.350</text><text class="ax" x="831" y="344.5">1.300</text><text class="ax" x="831" y="386.5">1.250</text><text class="ax" x="831" y="429.5">1.200</text><text class="ax" x="831" y="476.5">80</text><text class="ax" x="831" y="505.5">60</text><text class="ax" x="831" y="534.5">40</text><text class="ax" x="831" y="563.5">20</text><text class="ax" x="831" y="635.5">0.000</text><text class="ax" x="831" y="675.5">-0.025</text><text class="ax" x="831" y="715.5">-0.050</text>
<text class="ax" x="78.5" y="755" text-anchor="middle" letter-spacing="0.2">Feb 27</text><text class="ax" x="157.5" y="755" text-anchor="middle" letter-spacing="0.2">Mar 1</text><text class="ax" x="235.5" y="755" text-anchor="middle" letter-spacing="0.2">Mar 5</text><text class="ax" x="314.5" y="755" text-anchor="middle" letter-spacing="0.2">Mar 7</text><text class="ax" x="392.5" y="755" text-anchor="middle" letter-spacing="0.2">Mar 11</text><text class="ax" x="471.5" y="755" text-anchor="middle" letter-spacing="0.2">Mar 13</text><text class="ax" x="550.5" y="755" text-anchor="middle" letter-spacing="0.2">Mar 15</text><text class="ax" x="628.5" y="755" text-anchor="middle" letter-spacing="0.2">Mar 19</text><text class="ax" x="707.5" y="755" text-anchor="middle" letter-spacing="0.2">Mar 21</text><text class="ax" x="785.5" y="755" text-anchor="middle" letter-spacing="0.2">Mar 25</text>
<text class="top" x="13.5" y="13">L: C1.240</text>
<text class="lbb" x="8.7" y="455" textLength="18.5" lengthAdjust="spacing">RSI</text>
<rect x="44" y="450" width="17" height="2" fill="#191970"/>
<text class="lb" x="64.6" y="455" textLength="66.5" lengthAdjust="spacing">(14) Delayed</text>
<g transform="translate(140,452)"><path d="M-4,0 A4,4 0 0 1 4,0 L4,4 L0,4 A4,4 0 0 1 -4,0 Z" fill="url(#gb)"/><path d="M0.6,3.8 A3.9,3.9 0 1 1 3.8,-0.9" fill="none" stroke="#0a1624" stroke-width="1.2"/><path d="M-1.8,-2.4 L0.3,-0.7 L-0.7,0.7 Z" fill="#8c8ea0"/></g>
<text class="lbb" x="8.8" y="606" textLength="30" lengthAdjust="spacing">MACD</text>
<text class="lb" x="54" y="606" textLength="164" lengthAdjust="spacing">(12, 26, 9 - EMA, EMA) Delayed</text>
<g transform="translate(227,603)"><path d="M-4,0 A4,4 0 0 1 4,0 L4,4 L0,4 A4,4 0 0 1 -4,0 Z" fill="url(#gb)"/><path d="M0.6,3.8 A3.9,3.9 0 1 1 3.8,-0.9" fill="none" stroke="#0a1624" stroke-width="1.2"/><path d="M-1.8,-2.4 L0.3,-0.7 L-0.7,0.7 Z" fill="#8c8ea0"/></g>
<rect x="247" y="601" width="17" height="2" fill="#4f8f86"/>
<g><rect x="268" y="599" width="8" height="8" fill="#f4f4fa"/><path d="M269.3,602.4 L271.3,604.9 L274.6,601" fill="none" stroke="#1070e0" stroke-width="1.5"/></g>
<rect x="282" y="601" width="17" height="2" fill="#00008b"/>
<text class="lb" transform="translate(303.2,606) scale(1,0.87)" style="font-size:11px" textLength="42.3" lengthAdjust="spacing">SIGNAL</text>
<g><rect x="350.5" y="599" width="8" height="8" fill="#f4f4fa"/><path d="M351.8,602.4 L353.8,604.9 L357.1,601" fill="none" stroke="#1070e0" stroke-width="1.5"/></g>
<rect x="364" y="601" width="17" height="2" fill="#b8588a"/>
<text class="lb" transform="translate(385,606) scale(1,0.87)" style="font-size:11px" textLength="33.2" lengthAdjust="spacing">OSMA</text>
<g><rect x="423.5" y="599" width="8" height="8" fill="#f4f4fa"/><path d="M424.8,602.4 L426.8,604.9 L430.1,601" fill="none" stroke="#1070e0" stroke-width="1.5"/></g>
</svg>
</body></html>
